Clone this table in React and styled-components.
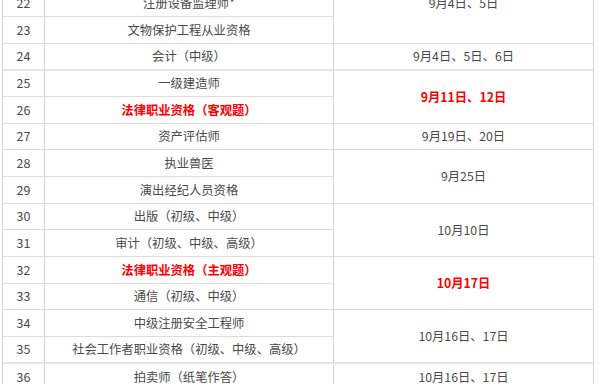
import React from "react";
import styled, { createGlobalStyle, css } from "styled-components";

const Global = createGlobalStyle`
  html, body { margin: 0; padding: 0; background: #fff; overflow: hidden; }
  body { font-family: "Noto Sans CJK SC", "Noto Sans", sans-serif; }
`;

const rows = [
  { n: 21, name: "注册测绘师", h: 27 },
  { n: 22, name: "注册设备监理师*", h: 27 },
  { n: 23, name: "文物保护工程从业资格", h: 27 },
  { n: 24, name: "会计（中级）", h: 27, thick: true },
  { n: 25, name: "一级建造师", h: 26 },
  { n: 26, name: "法律职业资格（客观题）", h: 27, red: true },
  { n: 27, name: "资产评估师", h: 26 },
  { n: 28, name: "执业兽医", h: 27 },
  { n: 29, name: "演出经纪人员资格", h: 27 },
  { n: 30, name: "出版（初级、中级）", h: 26 },
  { n: 31, name: "审计（初级、中级、高级）", h: 27 },
  { n: 32, name: "法律职业资格（主观题）", h: 27, red: true },
  { n: 33, name: "通信（初级、中级）", h: 26 },
  { n: 34, name: "中级注册安全工程师", h: 27 },
  { n: 35, name: "社会工作者职业资格（初级、中级、高级）", h: 27, thick: true },
  { n: 36, name: "拍卖师（纸笔作答）", h: 27 },
];

const dates = [
  { from: 0, span: 3, text: "9月4日、5日" },
  { from: 3, span: 1, text: "9月4日、5日、6日", thick: true },
  { from: 4, span: 2, text: "9月11日、12日", red: true },
  { from: 6, span: 1, text: "9月19日、20日" },
  { from: 7, span: 2, text: "9月25日" },
  { from: 9, span: 2, text: "10月10日" },
  { from: 11, span: 2, text: "10月17日", red: true },
  { from: 13, span: 2, text: "10月16日、17日", thick: true },
  { from: 15, span: 1, text: "10月16日、17日" },
];

const Table = styled.div`
  display: grid;
  grid-template-columns: 42px 289px 260px;
  grid-template-rows: ${(p) => p.$rows};
  width: 592px;
  margin: -37px 0 0 2px;
  border-left: 1px solid #d2d2d2;
  box-sizing: border-box;
`;

const Cell = styled.div`
  box-sizing: border-box;
  display: flex;
  align-items: center;
  justify-content: center;
  grid-row: ${(p) => p.$row} / span ${(p) => p.$span || 1};
  border-right: 1px solid #d2d2d2;
  border-bottom: ${(p) => (p.$thick ? "2px solid #e4e4e4" : "1px solid #dcdcdc")};
  font-size: 12.3px;
  line-height: 1;
  color: #4a4a4a;
  white-space: nowrap;
  overflow: hidden;
  ${(p) =>
    p.$red &&
    css`
      color: #ff0000;
      font-weight: bold;
    `}
`;

const NumCell = styled(Cell)`
  grid-column: 1;
  font-size: 12.5px;
`;

const NameCell = styled(Cell)`
  grid-column: 2;
`;

const DateCell = styled(Cell)`
  grid-column: 3;
`;

export default function App() {
  const tmpl = rows.map((r) => `${r.h}px`).join(" ");
  return (
    <>
      <Global />
      <Table $rows={tmpl}>
        {rows.map((r, i) => (
          <React.Fragment key={r.n}>
            <NumCell $row={i + 1} $thick={r.thick}>
              {r.n}
            </NumCell>
            <NameCell $row={i + 1} $thick={r.thick} $red={r.red}>
              {r.name}
            </NameCell>
          </React.Fragment>
        ))}
        {dates.map((d) => (
          <DateCell
            key={d.from}
            $row={d.from + 1}
            $span={d.span}
            $thick={d.thick}
            $red={d.red}
          >
            {d.text}
          </DateCell>
        ))}
      </Table>
    </>
  );
}
